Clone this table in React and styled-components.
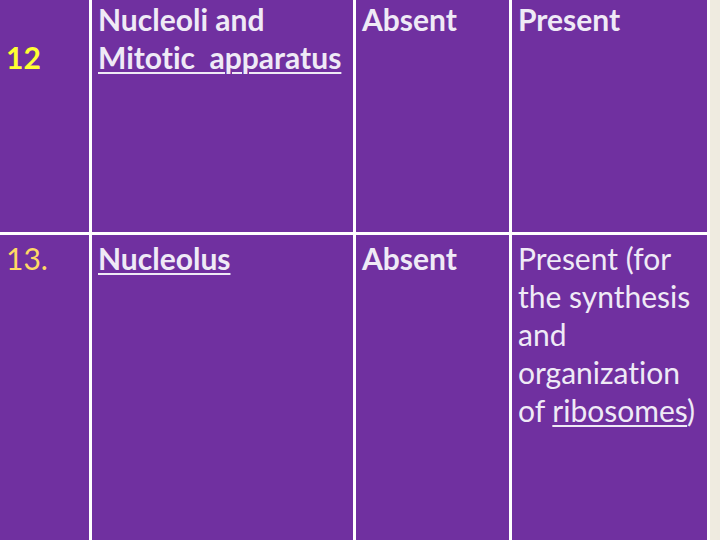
import React from "react"
import styled, { createGlobalStyle } from "styled-components"

const GlobalStyle = createGlobalStyle`
  html, body {
    margin: 0;
    padding: 0;
    background: #efebe0;
    overflow: hidden;
  }
  body {
    width: 720px;
    height: 540px;
  }
`

const Slide = styled.div`
  width: 720px;
  height: 540px;
  overflow: hidden;
`

const Table = styled.div`
  width: 707px;
  padding-right: 3px;
  background: #ffffff;
  display: grid;
  grid-template-columns: 89px 261px 153px 195px;
  grid-template-rows: 232px 320px;
  gap: 3px;
  font-family: Lato, "Open Sans", sans-serif;
  font-size: 30px;
  line-height: 38px;
  font-variant-ligatures: none;
  font-feature-settings: "liga" 0, "clig" 0;
  color: #efeaf6;
`

const Cell = styled.div`
  background: #7030a0;
  padding: ${(p) => (p.$top ? "0" : "4px")} 6px 0 6px;
  font-weight: ${(p) => (p.$bold ? 700 : 400)};
  overflow: hidden;
`

const Num = styled.span`
  display: block;
  padding-top: ${(p) => (p.$offset ? "38px" : "0")};
  color: ${(p) => (p.$bold ? "#ffff33" : "#ffd965")};
  font-weight: ${(p) => (p.$bold ? 700 : 400)};
`

const U = styled.span`
  text-decoration: underline;
  text-decoration-thickness: 2px;
  text-underline-offset: 3px;
  white-space: pre;
`

const App = () => (
  <Slide>
    <GlobalStyle />
    <Table>
      <Cell $top>
        <Num $bold $offset>12</Num>
      </Cell>
      <Cell $top $bold>
        Nucleoli and
        <br />
        <U>Mitotic  apparatus</U>
      </Cell>
      <Cell $top $bold>Absent</Cell>
      <Cell $top $bold>Present</Cell>

      <Cell>
        <Num>13.</Num>
      </Cell>
      <Cell $bold>
        <U>Nucleolus</U>
      </Cell>
      <Cell $bold>Absent</Cell>
      <Cell>
        Present (for the synthesis and organization of <U>ribosomes</U>)
      </Cell>
    </Table>
  </Slide>
)

export default App
